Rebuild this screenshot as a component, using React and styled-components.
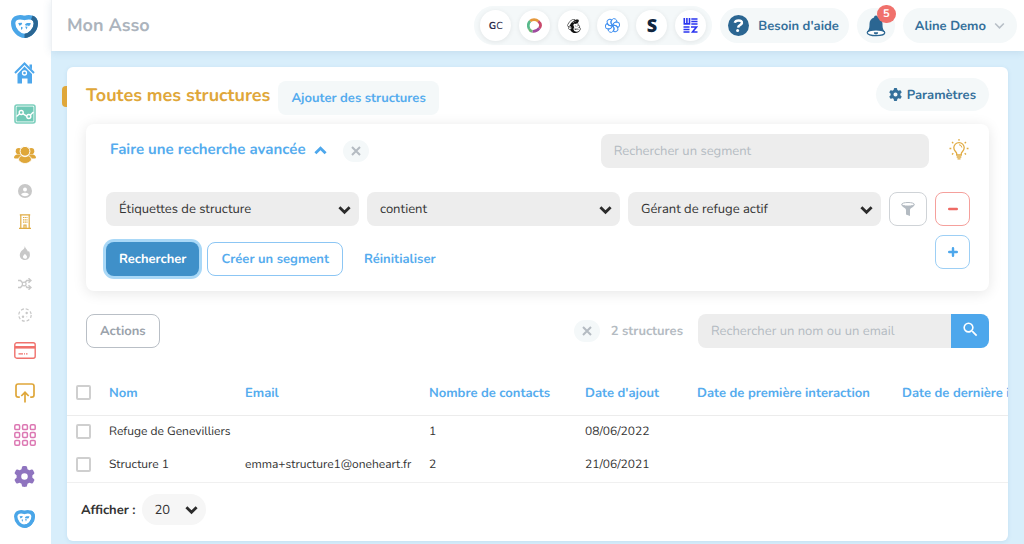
import { useState } from 'react';
import styled, { createGlobalStyle } from 'styled-components';
import { FaCircleUser, FaGear, FaMailchimp } from 'react-icons/fa6';
import { MdSearch } from 'react-icons/md';

const apps = [
  { name: 'GoCardless', icon: <GcMark /> },
  { name: 'Play', icon: <PlayMark /> },
  { name: 'Mailchimp', icon: <FaMailchimp size={16} color="#111" /> },
  { name: 'Sendinblue', icon: <PetalMark /> },
  { name: 'Stripe', icon: <StripeMark /> },
  { name: 'Weez', icon: <WeezMark /> },
];

const mainLinks = [
  { name: 'Accueil', icon: <HomeIcon /> },
  { name: 'Statistiques', icon: <StatsIcon /> },
  { name: 'Contacts', icon: <PeopleIcon /> },
];

const subLinks = [
  { name: 'Individus', icon: <FaCircleUser size={14} color="#c8c8c8" /> },
  { name: 'Structures', icon: <BuildingIcon /> },
  { name: 'Activité', icon: <FlameIcon /> },
  { name: 'Automatisations', icon: <ShuffleIcon /> },
  { name: 'Segments', icon: <SegmentIcon /> },
];

const otherLinks = [
  { name: 'Paiements', icon: <CardIcon /> },
  { name: 'Exports', icon: <UploadIcon /> },
  { name: 'Applications', icon: <GridIcon /> },
  { name: 'Réglages', icon: <FaGear size={21} color="#8f74bf" /> },
  { name: 'Communauté', icon: <HeartLogo width={21} height={18} color="#4aa6e8" side="#4aa6e8" /> },
];

const columns = [
  { label: 'Nom', width: 136 },
  { label: 'Email', width: 184 },
  { label: 'Nombre de contacts', width: 156 },
  { label: "Date d'ajout", width: 112 },
  { label: 'Date de première interaction', width: 205 },
  { label: 'Date de dernière interaction', width: 212 },
];

const structures = [
  { name: 'Refuge de Genevilliers', email: '', contacts: 1, added: '08/06/2022' },
  { name: 'Structure 1', email: 'emma+structure1@oneheart.fr', contacts: 2, added: '21/06/2021' },
];

export default function App() {
  const [checked, setChecked] = useState([]);

  function toggleRow(name) {
    setChecked(checked.includes(name) ? checked.filter((n) => n !== name) : [...checked, name]);
  }

  function toggleAll() {
    setChecked(checked.length === structures.length ? [] : structures.map((s) => s.name));
  }

  return (
    <>
      <GlobalStyle />
      <Layout>
        <Sidebar>
          <LogoLink href="#" aria-label="Mon Asso">
            <HeartLogo width={27} height={23} color="#4aa6e8" side="#2b6692" />
          </LogoLink>
          <LinkGroup links={mainLinks} height={41} />
          <LinkGroup links={subLinks} height={31} />
          <LinkGroup links={otherLinks} height={41} gap={1} />
        </Sidebar>

        <Main>
          <Header>
            <Brand>Mon Asso</Brand>
            <Apps>
              {apps.map((app) => (
                <AppButton key={app.name} type="button" aria-label={app.name}>
                  {app.icon}
                </AppButton>
              ))}
            </Apps>
            <HelpButton type="button">
              <HelpIcon />
              Besoin d'aide
            </HelpButton>
            <BellButton type="button" aria-label="Notifications">
              <BellIcon />
              <Badge>5</Badge>
            </BellButton>
            <UserButton type="button">
              Aline Demo
              <Chevron size={11} color="#b7bfc7" stroke={2} />
            </UserButton>
          </Header>

          <Content>
            <Panel>
              <TitleRow>
                <Title>Toutes mes structures</Title>
                <AddButton type="button">Ajouter des structures</AddButton>
                <SettingsButton type="button">
                  <FaGear size={13} />
                  Paramètres
                </SettingsButton>
              </TitleRow>

              <SearchCard>
                <SearchHead>
                  <AdvancedToggle type="button">
                    Faire une recherche avancée
                    <Chevron size={13} color="#4da7ec" stroke={3} up />
                  </AdvancedToggle>
                  <ClearButton type="button" aria-label="Fermer">
                    <CrossIcon />
                  </ClearButton>
                  <SegmentInput type="text" placeholder="Rechercher un segment" aria-label="Rechercher un segment" />
                  <TipButton type="button" aria-label="Astuce">
                    <BulbIcon />
                  </TipButton>
                </SearchHead>

                <FilterRow>
                  <SelectField label="Champ" options={['Étiquettes de structure']} />
                  <SelectField label="Condition" options={['contient']} />
                  <SelectField label="Valeur" options={['Gérant de refuge actif']} />
                  <SquareButton type="button" aria-label="Filtrer" $wide $color="#cfd3d7">
                    <FunnelIcon />
                  </SquareButton>
                  <SquareButton type="button" aria-label="Retirer" $color="#f5a09c">
                    <SignIcon color="#ee6a64" />
                  </SquareButton>
                </FilterRow>

                <ActionRow>
                  <Buttons>
                    <PrimaryButton type="button">Rechercher</PrimaryButton>
                    <OutlineButton type="button">Créer un segment</OutlineButton>
                    <TextButton type="button">Réinitialiser</TextButton>
                  </Buttons>
                  <SquareButton type="button" aria-label="Ajouter" $color="#9dcff5">
                    <SignIcon color="#4da7ec" plus />
                  </SquareButton>
                </ActionRow>
              </SearchCard>

              <ListBar>
                <OutlineButton type="button" $muted>
                  Actions
                </OutlineButton>
                <ListSearch>
                  <ClearButton type="button" aria-label="Effacer">
                    <CrossIcon />
                  </ClearButton>
                  <Count>2 structures</Count>
                  <SearchInput
                    type="text"
                    placeholder="Rechercher un nom ou un email"
                    aria-label="Rechercher un nom ou un email"
                  />
                  <SearchButton type="button" aria-label="Rechercher">
                    <MdSearch size={19} color="#fff" />
                  </SearchButton>
                </ListSearch>
              </ListBar>

              <TableScroll>
                <Table>
                  <colgroup>
                    <Col $width={42} />
                    {columns.map((column) => (
                      <Col key={column.label} $width={column.width} />
                    ))}
                  </colgroup>
                  <thead>
                    <tr>
                      <HeadCell>
                        <Checkbox
                          type="checkbox"
                          aria-label="Tout sélectionner"
                          checked={checked.length === structures.length}
                          onChange={toggleAll}
                        />
                      </HeadCell>
                      {columns.map((column) => (
                        <HeadCell key={column.label}>{column.label}</HeadCell>
                      ))}
                    </tr>
                  </thead>
                  <tbody>
                    {structures.map((structure) => (
                      <tr key={structure.name}>
                        <Cell>
                          <Checkbox
                            type="checkbox"
                            aria-label={structure.name}
                            checked={checked.includes(structure.name)}
                            onChange={() => toggleRow(structure.name)}
                          />
                        </Cell>
                        <Cell>{structure.name}</Cell>
                        <Cell>{structure.email}</Cell>
                        <Cell>{structure.contacts}</Cell>
                        <Cell>{structure.added}</Cell>
                        <Cell />
                        <Cell />
                      </tr>
                    ))}
                  </tbody>
                </Table>
              </TableScroll>

              <Pager>
                <PagerLabel htmlFor="page-size">Afficher :</PagerLabel>
                <SelectField id="page-size" options={['20']} small />
              </Pager>
            </Panel>
          </Content>
        </Main>
      </Layout>
    </>
  );
}

function LinkGroup({ links, height, gap = 0 }) {
  return (
    <NavList $gap={gap}>
      {links.map((link) => (
        <li key={link.name}>
          <NavLink href="#" aria-label={link.name} $height={height}>
            {link.icon}
          </NavLink>
        </li>
      ))}
    </NavList>
  );
}

function SelectField({ id, label, options, small }) {
  return (
    <SelectWrap $small={small}>
      <Select id={id} aria-label={label} $small={small}>
        {options.map((option) => (
          <option key={option}>{option}</option>
        ))}
      </Select>
      <SelectArrow $small={small}>
        <Chevron size={13} color="#2b2b2b" stroke={3} />
      </SelectArrow>
    </SelectWrap>
  );
}

function Chevron({ size, color, stroke, up }) {
  return (
    <svg width={size} height={size} viewBox="0 0 14 14" fill="none" stroke={color} strokeWidth={stroke}>
      <path d={up ? 'M1.5 10 7 4.5 12.5 10' : 'M1.5 4.5 7 10 12.5 4.5'} />
    </svg>
  );
}

function CrossIcon() {
  return (
    <svg width="10" height="10" viewBox="0 0 10 10" stroke="#b4bbc2" strokeWidth="2">
      <path d="M1 1 9 9M9 1 1 9" />
    </svg>
  );
}

function SignIcon({ color, plus }) {
  return (
    <svg width="10" height="10" viewBox="0 0 10 10" stroke={color} strokeWidth="2.4" strokeLinecap="round">
      <path d={plus ? 'M1.2 5h7.6M5 1.2v7.6' : 'M1.2 5h7.6'} />
    </svg>
  );
}

function HeartLogo({ width, height, color, side }) {
  return (
    <svg width={width} height={height} viewBox="0 0 27 23" fill="none">
      <path
        d="M13.5 3C10 1.800 2.200 1.200 2.200 8.400 2.200 14.800 8 20.800 13.500 20.800S24.800 14.800 24.800 8.400C24.800 1.200 17 1.800 13.500 3Z"
        stroke={color}
        strokeWidth="4.300"
      />
      <path d="M20.800 2.400C23.200 3.300 24.800 5.200 24.800 8.400 24.800 14.800 19 20.800 13.500 20.800" stroke={side} strokeWidth="4.300" />
      <path
        fill={color}
        d="M7.200 8 10.800 7.800 11.200 9 9.600 10.200 8.400 10.800ZM10 11.800 11.800 12.600 10.800 15 10 14ZM14 9.300 16 8 19.800 8 19.200 10 17.800 11.200 17 10.600 14.800 10.800ZM14.200 11.600 16.600 11.800 15.400 14.600Z"
      />
    </svg>
  );
}

function HomeIcon() {
  return (
    <svg width="21" height="22" viewBox="0 0 21 22">
      <path d="M1 11 10.5 1.5 20 11" fill="none" stroke="#4da7ec" strokeWidth="2" />
      <path d="M15.5 2.5H18V7.5L15.5 5Z" fill="#4da7ec" />
      <path d="M10.5 4.5 18 12V21.5H13.5V16.5H8V21.5H3.5V12Z" fill="#4da7ec" />
      <circle cx="10.5" cy="11" r="2" fill="none" stroke="#fff" strokeWidth="1.3" />
    </svg>
  );
}

function StatsIcon() {
  return (
    <svg width="22" height="20" viewBox="0 0 22 20">
      <rect x="1" y="1" width="20" height="18" rx="2" fill="#fff" stroke="#7ccfbd" strokeWidth="1.6" />
      <rect x="2.5" y="2.5" width="17" height="15" rx="0.5" fill="#70c9b6" />
      <g fill="none" stroke="#fff" strokeWidth="1.4">
        <path d="M2.500 12.500 5.600 9.800M8.800 9.600 13 12.300M16.400 11 19.500 8" />
        <circle cx="7.2" cy="8.5" r="2" />
        <circle cx="14.8" cy="12.5" r="2" />
      </g>
    </svg>
  );
}

function PeopleIcon() {
  return (
    <svg width="22" height="18" viewBox="0 0 22 18" fill="#dfa73a">
      <circle cx="4.8" cy="5.2" r="3.1" />
      <circle cx="17.2" cy="5.2" r="3.1" />
      <path d="M0 12C0 9.500 2 8.300 4 8.600H8V12.500H1ZM22 12C22 9.500 20 8.300 18 8.600H14V12.500H21Z" />
      <circle cx="11" cy="5.3" r="4.9" stroke="#fff" strokeWidth="1" />
      <path d="M4.500 14C4.500 10.800 7 9.500 8 9.700 9.500 11 12.500 11 14 9.700 15 9.500 17.500 10.800 17.500 14 16 16.300 13.500 17.500 11 17.500S6 16.300 4.500 14Z" stroke="#fff" strokeWidth="0.8" />
    </svg>
  );
}

function BuildingIcon() {
  return (
    <svg width="12" height="15" viewBox="0 0 12 15" fill="none" stroke="#e0ab42">
      <path d="M1.800 14V1H10.200V14M0 14.300H12M5 14V11H7V14M0.800 0.800H11.200" strokeWidth="1.2" />
      <path d="M4 3.500H8.500M4 5.800H8.500M4 8.100H8.500" strokeWidth="1.2" strokeDasharray="1.2 0.5" />
    </svg>
  );
}

function FlameIcon() {
  return (
    <svg width="12" height="14" viewBox="0 0 12 14">
      <path
        fill="#c8c8c8"
        fillRule="evenodd"
        d="M5.800 0C6.300 2.600 8.300 3.600 9 5.800L10 5C11.800 8.500 11.200 14 6 14S-0.500 8.500 2 5.500C3 4.200 5.500 3.500 5.800 0ZM6 7.800C5 9 4 9.600 4 10.800 4 12.200 5 12.700 6 12.700S8 12.200 8 10.900C8 9.600 6.800 9.200 6 7.800Z"
      />
    </svg>
  );
}

function ShuffleIcon() {
  return (
    <svg width="14" height="12" viewBox="0 0 14 12" fill="none" stroke="#c8c8c8" strokeWidth="1.5">
      <path d="M0 2.500H2.500L4.800 5M0 9.500H2.500L8.800 2.500H12.500M8 8.300 9 9.500H12.500M10.500 0.300 13 2.500 10.500 4.700M10.500 7.300 13 9.500 10.500 11.700" />
      <circle cx="6.2" cy="6" r="1.9" fill="#fff" strokeWidth="1.2" />
    </svg>
  );
}

function SegmentIcon() {
  return (
    <svg width="14" height="14" viewBox="0 0 14 14" fill="#c8c8c8">
      <circle cx="7" cy="7" r="6.2" fill="none" stroke="#c8c8c8" strokeDasharray="3 1.87" strokeWidth="1.2" />
      <circle cx="8.7" cy="5" r="1.2" />
      <circle cx="5" cy="8.8" r="1.2" />
      <circle cx="8.8" cy="8.8" r="0.5" />
    </svg>
  );
}

function CardIcon() {
  return (
    <svg width="22" height="17" viewBox="0 0 22 17" fill="none" stroke="#f0716c">
      <rect x="0.8" y="0.8" width="20.4" height="15.4" rx="2" strokeWidth="1.4" />
      <path d="M1 5.300H21" strokeWidth="2.6" />
      <path d="M4.500 11.800H9M10 11.800H11M12 11.800H13.500" strokeWidth="1.3" />
    </svg>
  );
}

function UploadIcon() {
  return (
    <svg width="20" height="20" viewBox="0 0 20 20" fill="none" stroke="#dfa73a" strokeWidth="1.7">
      <path d="M4.800 14.200H3.200Q1 14.200 1 12V3.200Q1 1 3.200 1H16.800Q19 1 19 3.200V12Q19 14.200 16.800 14.200H15.200" />
      <path d="M10 19.500V9.500M6.300 13 10 9.300 13.700 13" />
    </svg>
  );
}

function GridIcon() {
  const steps = [0.8, 8.6, 16.4];

  return (
    <svg width="22" height="22" viewBox="0 0 22 22" fill="none" stroke="#dc78b3" strokeWidth="1.5">
      {steps.map((y) => steps.map((x) => <rect key={`${x}-${y}`} x={x} y={y} width="4.8" height="4.8" rx="1.2" />))}
    </svg>
  );
}

function GcMark() {
  return (
    <Initials>
      <b>G</b>C
    </Initials>
  );
}

function StripeMark() {
  return <BoldInitial>S</BoldInitial>;
}

function PlayMark() {
  return (
    <svg width="15" height="15" viewBox="0 0 15 15" fill="none" strokeWidth="2.7">
      <path d="M2.200 11C1 8.500 1.200 5 3.200 3" stroke="#58b98b" />
      <path d="M3.200 3C5 1.300 9 1 11.300 3.300" stroke="#e5983c" />
      <path d="M11.300 3.300C13.600 5.300 14.300 7.800 12.300 10.200" stroke="#c9486b" />
      <path d="M12.300 10.200C10.600 12.400 8.500 13.700 5.500 13.400" stroke="#a04a9e" />
      <path d="M5.500 13.400C3.800 13.200 2.800 12.500 2.200 11" stroke="#6fb678" />
    </svg>
  );
}

function PetalMark() {
  return (
    <svg width="15" height="15" viewBox="0 0 15 15" fill="none" stroke="#3f8ff0">
      {[0, 60, 120, 180, 240, 300].map((angle) => (
        <path
          key={angle}
          d="M7.500 7.500C5.200 5.500 5.300 2.300 8.500 0.600 11.300 0.600 12.300 2.800 11.800 4.200 10.500 3.600 8.300 4.700 7.500 7.500"
          transform={`rotate(${angle} 7.500 7.500)`}
          strokeWidth="1"
        />
      ))}
    </svg>
  );
}

function WeezMark() {
  return (
    <svg width="15" height="15" viewBox="0 0 15 15" fill="none" stroke="#2a35f0" strokeWidth="1.6">
      <path d="M1.300 0V5.900H6.500V0M3.900 0V5.900M14.500 1H8.300M14.500 3.500H8.300M14.500 6H8.300" />
      <path d="M6.500 9H0.500M6.500 11.500H0.500M6.500 14H0.500M8 9H13.500L9.500 14H14.500" />
    </svg>
  );
}

function HelpIcon() {
  return (
    <svg width="21" height="21" viewBox="0 0 21 21">
      <circle cx="10.5" cy="10.5" r="10.5" fill="#2b6692" />
      <path d="M6.800 7.800C7.500 4.700 14.300 4.500 13.900 8 13.600 10.300 10.500 9.800 10.100 12.700" fill="none" stroke="#fff" strokeWidth="2.5" />
      <circle cx="9.6" cy="15.6" r="1.5" fill="#fff" />
    </svg>
  );
}

function BellIcon() {
  return (
    <svg width="20" height="22" viewBox="0 0 20 22">
      <path d="M10 0.500A2 2 0 0 1 12 2.500C15 3.500 16.500 6 16.500 9 16.500 13 17 14.500 19 17H1C3 14.500 3.500 13 3.500 9 3.500 6 5 3.500 8 2.500A2 2 0 0 1 10 0.500Z" fill="#2b6692" />
      <ellipse cx="10" cy="17.8" rx="8.8" ry="2.9" fill="#fff" stroke="#2b6692" strokeWidth="1.2" />
      <path d="M7.800 17.200A2.200 2.200 0 0 0 12.200 17.200Z" fill="#2b6692" />
    </svg>
  );
}

function BulbIcon() {
  return (
    <svg width="20" height="21" viewBox="0 0 20 21" fill="none" stroke="#e0ab42" strokeWidth="1.3">
      <path d="M7.700 16V14.500C7.700 13 4.800 12 4.800 8.800A5.200 5.200 0 0 1 15.200 8.800C15.200 12 12.300 13 12.300 14.500V16ZM7.700 18H12.300M8.500 19.800H11.500" />
      <path d="M10 5.700A3 3 0 0 1 12.800 8.500" strokeWidth="1" />
      <path d="M10 0V1.800M0.500 9.500H2.300M17.700 9.500H19.500M3 3 4.300 4.300M17 3 15.700 4.300M3 15.500 4.300 14.200M17 15.500 15.700 14.200" />
    </svg>
  );
}

function FunnelIcon() {
  return (
    <svg width="14" height="14" viewBox="0 0 14 14">
      <path d="M0.300 2.500C1 5.500 5 5.500 5 8V12.500L9 14V8C9 5.500 13 5.500 13.700 2.500Z" fill="#b4bbc2" />
      <ellipse cx="7" cy="2.3" rx="6.3" ry="1.8" fill="#fff" stroke="#b4bbc2" />
    </svg>
  );
}

const GlobalStyle = createGlobalStyle`
  * {
    box-sizing: border-box;
  }

  body {
    margin: 0;
    background: #d8eefb;
  }

  body, button, input, select {
    font-family: Nunito, 'Lato', sans-serif;
    font-size: 13px;
    text-rendering: geometricPrecision;
  }

  button {
    padding: 0;
    border: 0;
    background: none;
    white-space: nowrap;
    cursor: pointer;
  }

  svg {
    display: block;
    flex: none;
  }
`;

const Layout = styled.div`
  display: flex;
  min-height: 100vh;
`;

const Sidebar = styled.nav`
  flex: none;
  width: 51px;
  padding-right: 2px;
  background: #fff;
`;

const LogoLink = styled.a`
  display: flex;
  align-items: center;
  justify-content: center;
  height: 52px;
`;

const NavList = styled.ul`
  display: flex;
  flex-direction: column;
  gap: ${(props) => props.$gap}px;
  margin: 0;
  padding: 0;
  list-style: none;
`;

const NavLink = styled.a`
  display: flex;
  align-items: center;
  justify-content: center;
  height: ${(props) => props.$height}px;
`;

const Main = styled.div`
  flex: 1;
  min-width: 0;
`;

const Header = styled.header`
  display: flex;
  align-items: center;
  gap: 8px;
  height: 51px;
  padding: 0 7px 0 15px;
  border-left: 1px solid #eef1f4;
  background: #fff;
  box-shadow: 0 1px 8px rgba(60, 110, 150, 0.15);
`;

const Brand = styled.div`
  margin-right: auto;
  font-size: 18px;
  font-weight: 700;
  line-height: 22px;
  color: #acb4bd;
`;

const Apps = styled.div`
  display: flex;
  gap: 8px;
  padding: 4px 6px;
  border-radius: 20px;
  background: #f4f8f9;
`;

const AppButton = styled.button`
  display: flex;
  align-items: center;
  justify-content: center;
  width: 31px;
  height: 31px;
  border-radius: 50%;
  background: #fff;
  box-shadow: 0 1px 5px rgba(0, 0, 0, 0.08);
`;

const Initials = styled.span`
  font-size: 10px;
  color: #2b2b4a;
`;

const BoldInitial = styled.span`
  font-family: 'Open Sans', sans-serif;
  font-size: 18px;
  font-weight: 800;
  line-height: 20px;
  color: #11263f;
`;

const PillButton = styled.button`
  display: flex;
  align-items: center;
  height: 35px;
  border-radius: 18px;
  background: #f4f8f9;
  font-weight: 700;
  color: #34709b;
`;

const HelpButton = styled(PillButton)`
  gap: 9px;
  padding: 0 10px 0 8px;
`;

const BellButton = styled(PillButton)`
  position: relative;
  justify-content: center;
  width: 38px;
`;

const Badge = styled.span`
  position: absolute;
  top: -3px;
  right: -1px;
  width: 19px;
  height: 18px;
  border-radius: 9px;
  background: #f0716c;
  font-size: 11px;
  line-height: 18px;
  color: #fff;
`;

const UserButton = styled(PillButton)`
  gap: 8px;
  padding: 0 12px;
`;

const Content = styled.main`
  padding: 16px 16px 3px;
`;

const Panel = styled.section`
  position: relative;
  padding-top: 11px;
  border-radius: 6px;
  background: #fff;
  box-shadow: 0 1px 4px rgba(60, 120, 170, 0.12);

  &::before {
    content: '';
    position: absolute;
    top: 19px;
    left: -5px;
    width: 5px;
    height: 21px;
    border-radius: 4px 0 0 4px;
    background: #dfa73a;
  }
`;

const TitleRow = styled.div`
  display: flex;
  align-items: flex-start;
  gap: 8px;
  padding: 0 19px;
`;

const Title = styled.h1`
  margin: 0;
  font-size: 18px;
  font-weight: 700;
  line-height: 37px;
  color: #dfa73a;
`;

const AddButton = styled.button`
  height: 34px;
  margin-top: 3px;
  padding: 0 13px;
  border-radius: 8px;
  background: #f4f8f9;
  font-weight: 700;
  color: #55acee;
`;

const SettingsButton = styled(PillButton)`
  gap: 5px;
  height: 33px;
  margin-left: auto;
  padding: 0 13px;
`;

const SearchCard = styled.div`
  margin: 9px 19px 23px;
  padding: 10px 19px 15px 20px;
  border-radius: 8px;
  background: #fff;
  box-shadow: 0 2px 14px rgba(0, 0, 0, 0.1);
`;

const SearchHead = styled.div`
  display: flex;
  align-items: center;
`;

const AdvancedToggle = styled.button`
  display: flex;
  align-items: center;
  gap: 8px;
  margin-left: 4px;
  padding-bottom: 2px;
  font-size: 15px;
  font-weight: 700;
  color: #55acee;
`;

const ClearButton = styled.button`
  display: flex;
  align-items: center;
  justify-content: center;
  flex: none;
  width: 26px;
  height: 22px;
  margin-left: 16px;
  border-radius: 11px;
  background: #f4f8f9;
`;

const TextInput = styled.input`
  height: 34px;
  padding: 0 13px;
  border: 0;
  border-radius: 8px;
  background: #ededed;
  color: #333;

  &::placeholder {
    color: #b4bbc2;
    opacity: 1;
  }
`;

const SegmentInput = styled(TextInput)`
  width: 38%;
  margin-left: auto;
`;

const TipButton = styled.button`
  margin: 0 1px 0 20px;
  padding-bottom: 3px;
`;

const FilterRow = styled.div`
  display: flex;
  gap: 8px;
  margin-top: 24px;
`;

const SelectWrap = styled.div`
  position: relative;
  flex: ${(props) => (props.$small ? 'none' : '1')};
  width: ${(props) => (props.$small ? '64px' : 'auto')};
`;

const Select = styled.select`
  display: block;
  width: 100%;
  height: ${(props) => (props.$small ? '31px' : '34px')};
  padding: 0 13px;
  border: 0;
  border-radius: ${(props) => (props.$small ? '16px' : '8px')};
  background: ${(props) => (props.$small ? '#f6f6f6' : '#ededed')};
  color: #333;
  appearance: none;
`;

const SelectArrow = styled.span`
  position: absolute;
  top: ${(props) => (props.$small ? '9px' : '11px')};
  right: 8px;
  pointer-events: none;
`;

const SquareButton = styled.button`
  display: flex;
  align-items: center;
  justify-content: center;
  flex: none;
  width: ${(props) => (props.$wide ? '38px' : '35px')};
  height: 34px;
  border: 1px solid ${(props) => props.$color};
  border-radius: 8px;
  background: #fff;
`;

const ActionRow = styled.div`
  display: flex;
  align-items: flex-start;
  justify-content: space-between;
  margin-top: 9px;
`;

const Buttons = styled.div`
  display: flex;
  gap: 8px;
  padding-top: 7px;
`;

const PrimaryButton = styled.button`
  height: 34px;
  padding: 0 13px;
  border-radius: 8px;
  background: #3f90c9;
  box-shadow: 0 0 0 3px #a9d8f7;
  font-weight: 700;
  color: #fff;
`;

const OutlineButton = styled.button`
  height: 34px;
  padding: 0 13px;
  border: 1px solid ${(props) => (props.$muted ? '#b9bfc6' : '#8cc6f4')};
  border-radius: 8px;
  background: #fff;
  font-weight: 700;
  color: ${(props) => (props.$muted ? '#9aa2ab' : '#55acee')};
`;

const TextButton = styled.button`
  height: 34px;
  padding: 0 13px;
  font-weight: 700;
  color: #55acee;
`;

const ListBar = styled.div`
  display: flex;
  align-items: center;
  justify-content: space-between;
  padding: 0 19px;
`;

const ListSearch = styled.div`
  display: flex;
  align-items: center;
`;

const Count = styled.span`
  margin: 0 15px 0 11px;
  font-weight: 700;
  color: #b4bbc2;
`;

const SearchInput = styled(TextInput)`
  width: 253px;
  border-radius: 8px 0 0 8px;
`;

const SearchButton = styled.button`
  display: flex;
  align-items: center;
  justify-content: center;
  width: 38px;
  height: 34px;
  padding-bottom: 4px;
  border-radius: 0 8px 8px 0;
  background: #4da7ec;
`;

const TableScroll = styled.div`
  margin-top: 23px;
  padding-bottom: 1px;
  overflow-x: auto;
  border-bottom: 1px solid #f0f0f0;
  scrollbar-width: none;
`;

const Table = styled.table`
  width: 1047px;
  min-width: 100%;
  border-collapse: collapse;
  table-layout: fixed;
`;

const Col = styled.col`
  width: ${(props) => props.$width}px;
`;

const HeadCell = styled.th`
  height: 44px;
  padding: 0;
  border-bottom: 1px solid #ececec;
  font-size: 13px;
  font-weight: 700;
  text-align: left;
  white-space: nowrap;
  color: #55acee;
`;

const Cell = styled.td`
  height: 33px;
  padding: 0;
  font-size: 12px;
  color: #333;
`;

const Checkbox = styled.input`
  display: block;
  width: 15px;
  height: 15px;
  margin: 0 0 0 9px;
  border: 2px solid #cfcfcf;
  border-radius: 2px;
  background: #fff;
  appearance: none;

  &:checked {
    border-color: #4da7ec;
    background: #4da7ec;
  }
`;

const Pager = styled.div`
  display: flex;
  align-items: center;
  gap: 6px;
  padding: 11px 14px 16px;
`;

const PagerLabel = styled.label`
  font-weight: 700;
  color: #333;
`;
